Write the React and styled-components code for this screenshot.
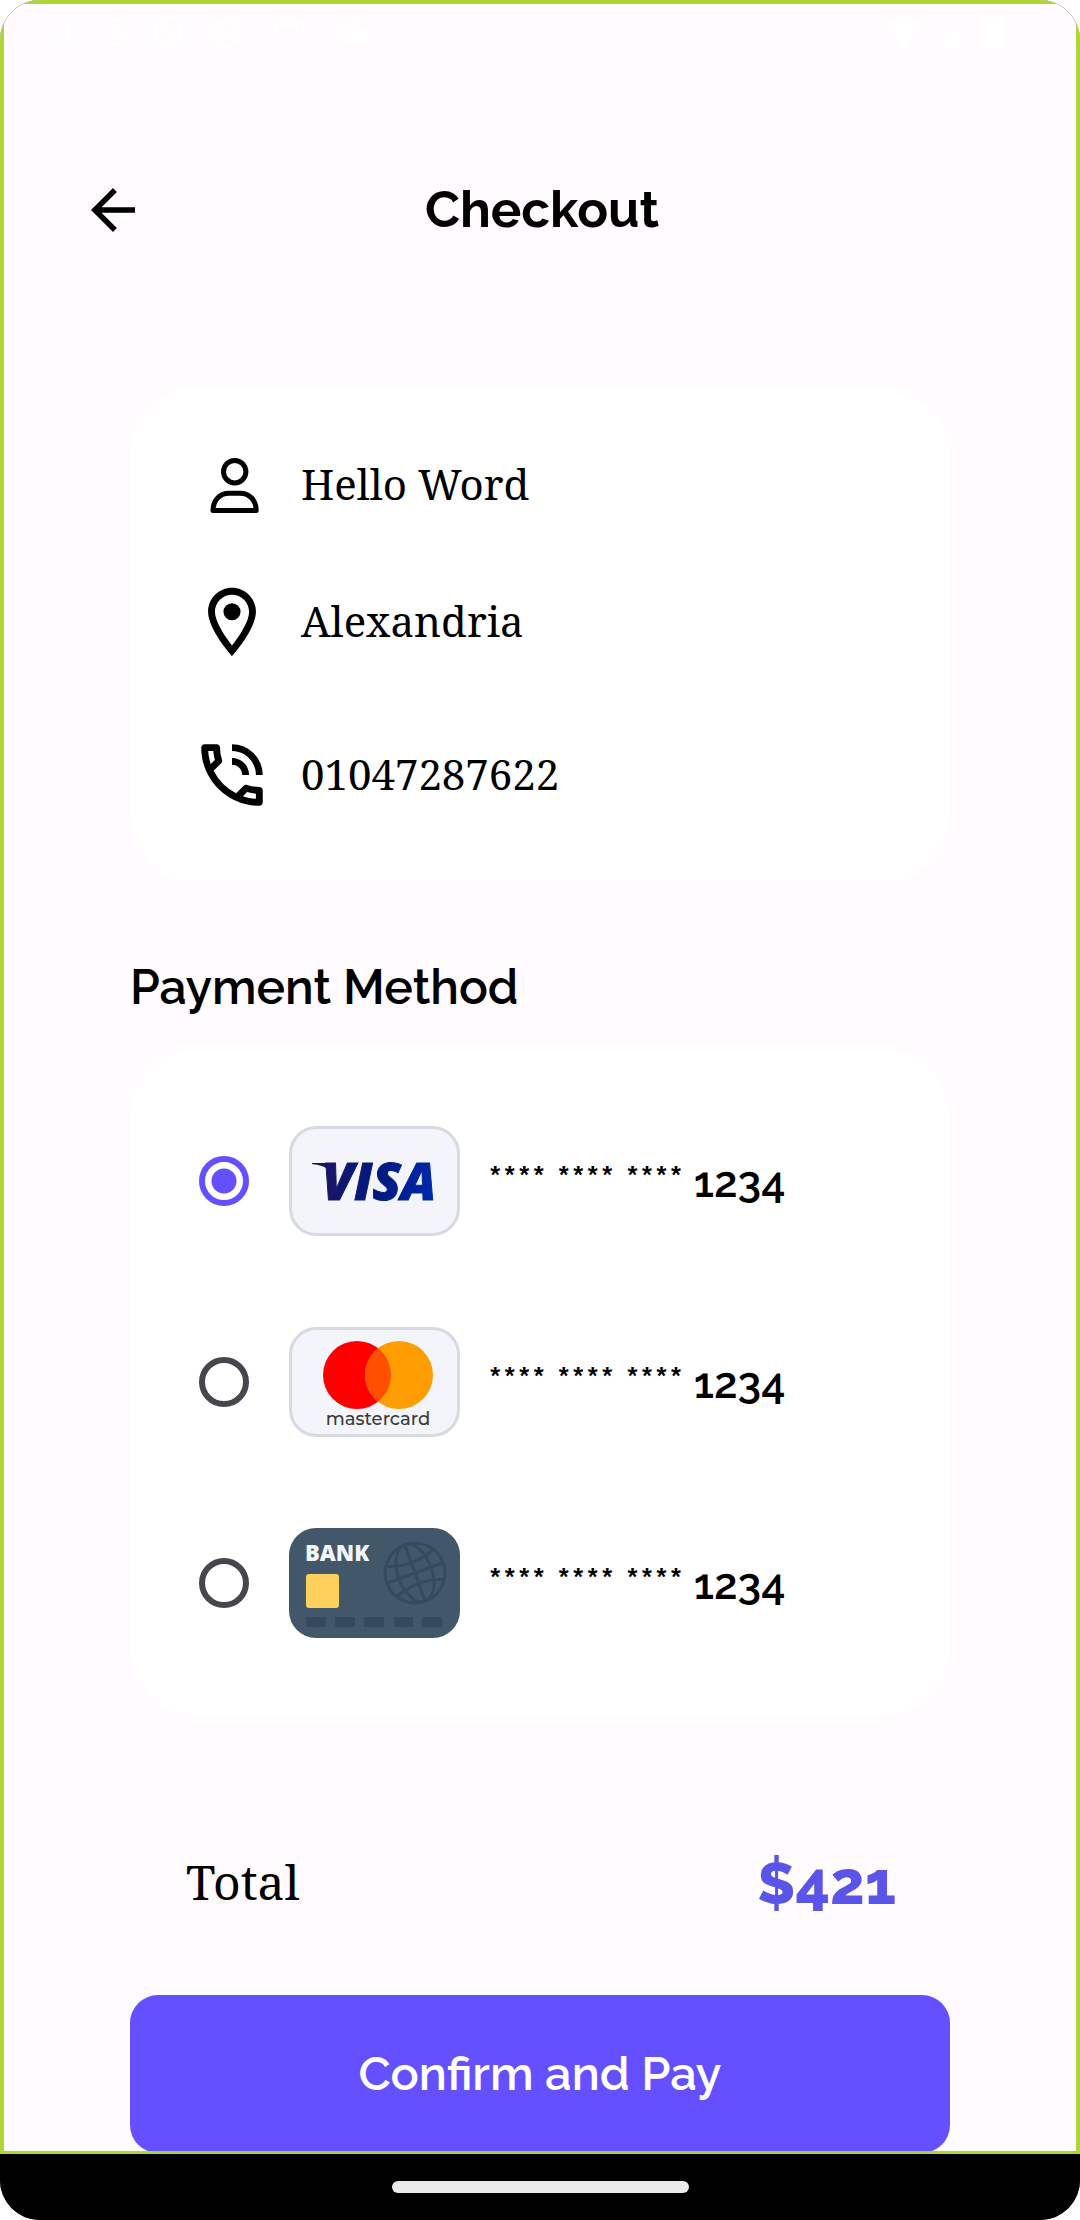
import React, { useState } from "react";
import styled, { createGlobalStyle } from "styled-components";
import { MdArrowBack, MdOutlinePhoneInTalk } from "react-icons/md";

const GlobalStyle = createGlobalStyle`
  * { box-sizing: border-box; }
  body { margin: 0; background: #ffffff; }
`;

const sans = `Raleway, Montserrat, Lato, "Open Sans", sans-serif`;
const serif = `"Noto Serif", "DejaVu Serif", serif`;

const Device = styled.div`
  display: flex;
  flex-direction: column;
  min-height: 100vh;
  overflow: hidden;
  border-radius: 40px;
  background: #000000;
  color: #000000;
  font-family: ${sans};
`;

const Screen = styled.div`
  position: relative;
  flex: 1;
  display: flex;
  flex-direction: column;
  background: #fffbff;

  &::after {
    content: "";
    position: absolute;
    inset: 0;
    border: 4px solid #a9d52c;
    border-bottom-width: 3px;
    opacity: 0.95;
    pointer-events: none;
  }
`;

const StatusBar = styled.div`
  display: flex;
  justify-content: space-between;
  align-items: center;
  height: 66px;
  padding: 0 76px 0 52px;
  color: #ffffff;
`;

const StatusGroup = styled.div`
  display: flex;
  align-items: center;
  gap: ${(p) => p.$gap}px;
`;

const Clock = styled.span`
  font: 400 38px/48px Roboto, sans-serif;
`;

const Header = styled.header`
  display: grid;
  grid-template-columns: 66px 1fr 66px;
  align-items: center;
  padding: 111px 76px 0 80px;
`;

const BackButton = styled.button`
  display: flex;
  padding: 0;
  border: 0;
  background: none;
  color: inherit;
  cursor: pointer;
`;

const Title = styled.h1`
  margin: 0;
  padding-bottom: 2px;
  font-size: 51px;
  line-height: 64px;
  font-weight: 700;
  text-align: center;
`;

const Main = styled.main`
  display: flex;
  flex-direction: column;
  padding: 144px 130px 0;
`;

const Card = styled.section`
  padding: ${(p) => p.$padding};
  border-radius: 69px;
  background: #ffffff;
`;

const ContactRow = styled.div`
  display: flex;
  align-items: center;
  gap: 28px;
  margin-bottom: ${(p) => p.$space}px;
  font-family: ${serif};
  font-size: 42px;
  line-height: 56px;

  svg { flex: none; }
  span { padding-bottom: 2px; }
`;

const SectionTitle = styled.h2`
  margin: 75px 0 32px;
  font-size: 48px;
  line-height: 56px;
  font-weight: 600;
`;

const Method = styled.label`
  display: flex;
  align-items: center;
  height: 201px;
  cursor: pointer;
`;

const Radio = styled.input`
  appearance: none;
  flex: none;
  width: 50px;
  height: 50px;
  margin: 0 40px 0 0;
  border: 6px solid #49454f;
  border-radius: 50%;

  &:checked {
    border-color: #6450ff;
    background: radial-gradient(circle, #6450ff 12px, transparent 13px);
  }
`;

const CardNumber = styled.span`
  margin-left: 28px;
  padding-top: 2px;
  font-size: 43px;
  line-height: 48px;
  font-weight: 600;
  white-space: pre;
`;

const TotalRow = styled.div`
  display: flex;
  justify-content: space-between;
  align-items: center;
  margin: 133px 0 81px;
  padding: 0 54px 0 56px;
`;

const TotalLabel = styled.span`
  font-family: ${serif};
  font-size: 48px;
  line-height: 64px;
`;

const TotalAmount = styled.strong`
  padding-top: 2px;
  color: #5a55e8;
  font-size: 60px;
  line-height: 62px;
  font-weight: 800;
`;

const PayButton = styled.button`
  height: 158px;
  padding: 0;
  border: 0;
  border-radius: 28px;
  background: #6450ff;
  color: #ffffff;
  font-family: inherit;
  font-size: 47px;
  line-height: 56px;
  font-weight: 600;
  cursor: pointer;
`;

const NavBar = styled.div`
  display: flex;
  justify-content: center;
  align-items: center;
  height: 66px;
  background: #000000;
`;

const HomeHandle = styled.div`
  width: 297px;
  height: 12px;
  border-radius: 6px;
  background: #ebebeb;
`;

const ShieldIcon = () => (
  <svg width="30" height="36" viewBox="0 0 30 36" fill="none" stroke="currentColor" strokeWidth="3">
    <path d="M15 2 28 6v13c0 7-6 12-13 15C8 31 2 26 2 19V6Z" />
    <path d="M9 4c0 14 13 12 11 26" />
  </svg>
);

const GoogleIcon = () => (
  <svg width="34" height="34" viewBox="0 0 34 34" fill="none" stroke="currentColor" strokeWidth="6">
    <path d="M27 8A13 13 0 1 0 30 17H17" />
  </svg>
);

const FaceIcon = () => (
  <svg width="34" height="34" viewBox="0 0 34 34" fill="currentColor">
    <circle cx="17" cy="17" r="15" fill="none" stroke="currentColor" strokeWidth="3" />
    <path d="M7 5h20l-2 9-4-3h-8l-4 3Z" />
  </svg>
);

const CloudIcon = () => (
  <svg width="38" height="34" viewBox="0 0 38 34" fill="currentColor">
    <path d="M8 26a7 7 0 0 1-1-13 12 12 0 0 1 21-2 8 8 0 0 1 3 15Z" />
  </svg>
);

const SignalIcons = () => (
  <svg width="120" height="36" viewBox="0 0 120 36" fill="currentColor">
    <path d="M0 9Q20-7 40 9L20 34ZM46 35 78 3v32ZM97 4h5V0h12v4h5v31H97Z" />
  </svg>
);

const PersonIcon = () => (
  <svg width="82" height="82" viewBox="0 0 82 82" fill="none" stroke="#000" strokeWidth="5" strokeLinejoin="round">
    <circle cx="43.7" cy="27.7" r="11.2" />
    <path d="M22 66.5H65.2C65.2 57 59 49.2 49 49.2H38.2C28 49.2 22 57 22 66.5Z" />
  </svg>
);

const PinIcon = () => (
  <svg width="82" height="82" viewBox="0 0 24 24" fill="#000">
    <path d="M12 2C8.13 2 5 5.13 5 9c0 5.25 7 13 7 13s7-7.75 7-13c0-3.87-3.13-7-7-7zM7 9c0-2.76 2.24-5 5-5s5 2.24 5 5c0 2.88-2.88 7.19-5 9.88C9.92 16.21 7 11.85 7 9z" />
    <circle cx="12" cy="9" r="2.5" />
  </svg>
);

const VisaCard = () => (
  <svg width="171" height="110" viewBox="0 0 171 110" role="img" aria-label="Visa">
    <defs>
      <linearGradient id="visaInk" x1="0" x2="1">
        <stop offset="0" stopColor="#1b1464" />
        <stop offset="0.5" stopColor="#001a80" />
        <stop offset="1" stopColor="#0028ad" />
      </linearGradient>
    </defs>
    <rect x="1.5" y="1.5" width="168" height="107" rx="26" fill="#f4f5fa" stroke="#d8dae3" strokeWidth="3" />
    <path d="M23 37H42L44 47Q36 39 23 38Z" fill="#1b1464" />
    <text x="33" y="74" fill="url(#visaInk)" stroke="url(#visaInk)" strokeWidth="1" fontFamily="Open Sans" fontSize="52" fontWeight="800" fontStyle="italic">
      VISA
    </text>
  </svg>
);

const MasterCard = () => (
  <svg width="171" height="110" viewBox="0 0 171 110" role="img" aria-label="Mastercard">
    <rect x="1.5" y="1.5" width="168" height="107" rx="26" fill="#f4f5fa" stroke="#d8dae3" strokeWidth="3" />
    <circle cx="68" cy="48" r="34" fill="#ff0000" />
    <circle cx="110" cy="48" r="34" fill="#ff9c00" />
    <path d="M89 21.3a34 34 0 0 1 0 53.4a34 34 0 0 1 0-53.4Z" fill="#ff5000" />
    <text x="89" y="98" textAnchor="middle" fill="#3a3a3a" fontFamily="Montserrat, Open Sans" fontSize="18" fontWeight="500">
      mastercard
    </text>
  </svg>
);

const BankCard = () => (
  <svg width="171" height="110" viewBox="0 0 171 110" role="img" aria-label="Bank card">
    <rect width="171" height="110" rx="27" fill="#42586a" />
    <text x="16" y="33" fill="#f4f5fa" fontFamily="Open Sans" fontSize="22" fontWeight="800">
      BANK
    </text>
    <rect x="17" y="46" width="33" height="34" rx="3" fill="#ffd05b" />
    <g fill="none" stroke="#364a5e" strokeWidth="3" transform="rotate(-20 126 45)">
      <circle cx="126" cy="45" r="30" />
      <ellipse cx="126" cy="45" rx="17" ry="30" />
      <path d="M126 15v60M96 45h60M101 29q25 10 50 0M101 61q25-10 50 0" />
    </g>
    <path d="M17 89h20v10H17ZM46 89h20v10H46ZM75 89h20v10H75ZM105 89h19v10h-19ZM133 89h20v10h-20Z" fill="#364a5e" />
  </svg>
);

const contacts = [
  { text: "Hello Word", icon: <PersonIcon />, space: 55 },
  { text: "Alexandria", icon: <PinIcon />, space: 71 },
  { text: "01047287622", icon: <MdOutlinePhoneInTalk size={82} />, space: 0 },
];

const methods = [
  { id: "visa", art: <VisaCard /> },
  { id: "mastercard", art: <MasterCard /> },
  { id: "bank", art: <BankCard /> },
];

export default function App() {
  const [selected, setSelected] = useState("visa");

  return (
    <>
      <GlobalStyle />
      <Device>
        <Screen>
          <StatusBar>
            <StatusGroup $gap={28}>
              <Clock>9:13</Clock>
              <ShieldIcon />
              <GoogleIcon />
              <FaceIcon />
              <CloudIcon />
            </StatusGroup>
            <SignalIcons />
          </StatusBar>
          <Header>
            <BackButton type="button" aria-label="Back">
              <MdArrowBack size={66} />
            </BackButton>
            <Title>Checkout</Title>
          </Header>
          <Main>
            <Card $padding="57px 61px 68px">
              {contacts.map((c) => (
                <ContactRow key={c.text} $space={c.space}>
                  {c.icon}
                  <span>{c.text}</span>
                </ContactRow>
              ))}
            </Card>
            <SectionTitle>Payment Method</SectionTitle>
            <Card $padding="33px 69px 34px">
              {methods.map((m) => (
                <Method key={m.id} htmlFor={m.id}>
                  <Radio
                    type="radio"
                    name="method"
                    id={m.id}
                    checked={selected === m.id}
                    onChange={() => setSelected(m.id)}
                  />
                  {m.art}
                  <CardNumber>**** **** **** 1234</CardNumber>
                </Method>
              ))}
            </Card>
            <TotalRow>
              <TotalLabel>Total</TotalLabel>
              <TotalAmount>$421</TotalAmount>
            </TotalRow>
            <PayButton type="button">Confirm and Pay</PayButton>
          </Main>
        </Screen>
        <NavBar>
          <HomeHandle />
        </NavBar>
      </Device>
    </>
  );
}
